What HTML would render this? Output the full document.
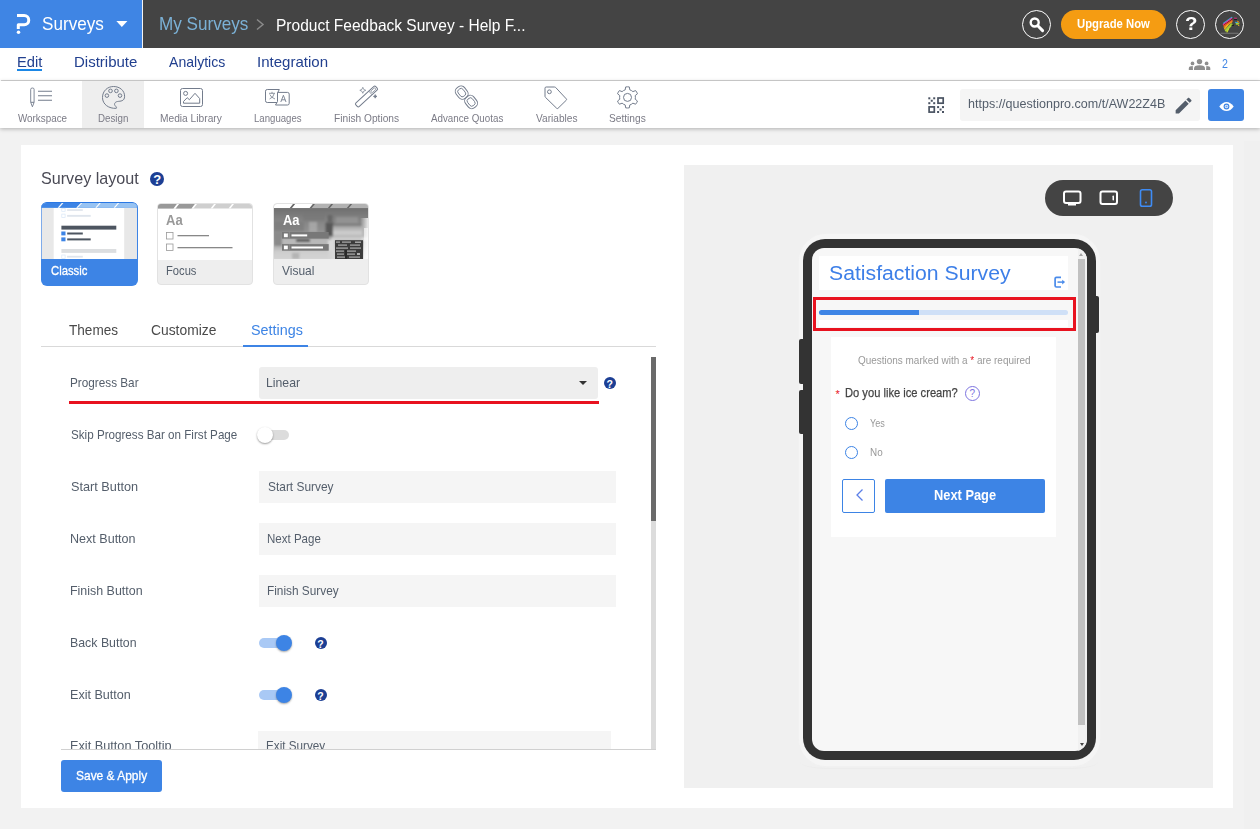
<!DOCTYPE html>
<html lang="en">
<head>
<meta charset="utf-8">
<title>Product Feedback Survey - Design</title>
<style>
*{box-sizing:border-box;margin:0;padding:0}
html,body{width:1260px;height:829px;overflow:hidden}
body{position:relative;background:#f2f2f2;font-family:"Liberation Sans",sans-serif;color:#4a4a4a}
.a{position:absolute}
.t{position:absolute;white-space:nowrap;line-height:1;transform-origin:0 0;z-index:2}
svg{position:absolute;overflow:visible}
/* top bar */
#top{left:0;top:0;width:1260px;height:48px;background:#444}
#brand{left:0;top:0;width:142px;height:48px;background:#3f85e4}
#brandsep{left:142px;top:0;width:1px;height:48px;background:#f4f4f4}
#sub{left:0;top:48px;width:1260px;height:33px;background:#fff}
#subline{left:1px;top:80px;width:1259px;height:1px;background:#d4d4d4}
#tool{left:0;top:81px;width:1260px;height:47px;background:#fff;box-shadow:0 1px 4px rgba(0,0,0,.28)}
#design-bg{left:82px;top:81px;width:62px;height:47px;background:#eee}
.circ{border:1.5px solid #fff;border-radius:50%;width:29px;height:29px;top:10px}
#upg{left:1061px;top:10px;width:105px;height:29px;border-radius:15px;background:#f59c12}
#urlbox{left:960px;top:89px;width:240px;height:32px;background:#f5f5f5;border-radius:3px}
#eye{left:1208px;top:89px;width:36px;height:32px;background:#3f85e4;border-radius:3px}
/* card */
#card{left:21px;top:145px;width:1212px;height:663px;background:#fff}
#prev{left:684px;top:165px;width:529px;height:622.500px;background:#f0f0f0}
.tl{color:#7b7b86;font-size:11px}
.nav{color:#22408f;font-size:15px}
.lbl{color:#545e6b;font-size:12.5px}
.inp{background:#f5f5f5;left:259px;width:357px;height:32px}
.help{width:12px;height:12px;border-radius:50%;background:#1c3f94;color:#fff;font-size:10.5px;font-weight:bold;text-align:center;line-height:14px;overflow:hidden}
</style>
</head>
<body>
<!-- TOP BAR -->
<div id="top" class="a"></div>
<div id="brand" class="a"></div>
<div id="brandsep" class="a"></div>
<div id="sub" class="a"></div>
<div id="subline" class="a"></div>
<div id="tool" class="a"></div>
<div id="design-bg" class="a"></div>

<span class="t" id="t-surveys" style="left:41.70px;top:13.96px;font-size:19px;color:#fff;transform:scaleX(0.9006)">Surveys</span>
<span class="t" id="t-mysurveys" style="left:158.53px;top:13.96px;font-size:19px;color:#7bb1d6;transform:scaleX(0.9007)">My Surveys</span>
<span class="t" id="t-title" style="left:275.79px;top:16.58px;font-size:16.5px;color:#fff;transform:scaleX(0.9413)">Product Feedback Survey - Help F...</span>
<span class="t" id="t-upg" style="left:1077.11px;top:16.86px;font-size:13px;color:#fff;font-weight:bold;transform:scaleX(0.8694)">Upgrade Now</span>

<span class="t nav" id="t-edit" style="left:16.67px;top:54.25px;font-size:15px;transform:scaleX(0.9801)">Edit</span>
<span class="t nav" id="t-dist" style="left:73.68px;top:54.25px;font-size:15px;transform:scaleX(0.9997)">Distribute</span>
<span class="t nav" id="t-anal" style="left:168.71px;top:54.25px;font-size:15px;transform:scaleX(0.9378)">Analytics</span>
<span class="t nav" id="t-integ" style="left:257.17px;top:54.25px;font-size:15px;transform:scaleX(1.0030)">Integration</span>
<div class="a" style="left:17px;top:69px;width:25px;height:2px;background:#1b87e6"></div>
<span class="t" id="t-two" style="left:1222.13px;top:56.96px;font-size:13px;color:#3f85e4;transform:scaleX(0.8191)">2</span>

<span class="t tl" id="t-work" style="left:17.71px;top:112.83px;font-size:11.5px;transform:scaleX(0.8559)">Workspace</span>
<span class="t tl" id="t-design" style="left:98.17px;top:112.83px;font-size:11.5px;transform:scaleX(0.8473)">Design</span>
<span class="t tl" id="t-media" style="left:160.20px;top:112.83px;font-size:11.5px;transform:scaleX(0.8871)">Media Library</span>
<span class="t tl" id="t-lang" style="left:254.20px;top:112.83px;font-size:11.5px;transform:scaleX(0.8356)">Languages</span>
<span class="t tl" id="t-finish" style="left:333.70px;top:112.83px;font-size:11.5px;transform:scaleX(0.8850)">Finish Options</span>
<span class="t tl" id="t-quota" style="left:430.71px;top:112.83px;font-size:11.5px;transform:scaleX(0.8502)">Advance Quotas</span>
<span class="t tl" id="t-vars" style="left:535.71px;top:112.83px;font-size:11.5px;transform:scaleX(0.8823)">Variables</span>
<span class="t tl" id="t-sett" style="left:609.21px;top:112.83px;font-size:11.5px;transform:scaleX(0.8844)">Settings</span>

<div id="urlbox" class="a"></div>
<span class="t" id="t-url" style="left:968.20px;top:97.46px;font-size:13px;color:#545e6b;transform:scaleX(0.9637)">https://questionpro.com/t/AW22Z4B</span>
<div id="eye" class="a"></div>
<div class="a circ" style="left:1022px"></div>
<div id="upg" class="a"></div>
<div class="a circ" style="left:1176px"></div>
<div class="a circ" style="left:1215px"></div>


<!-- ICONS: top bar -->
<svg style="left:0;top:0" width="142" height="48" viewBox="0 0 142 48" fill="none">
  <path d="M17 15.600H24.200A4.550 4.550 0 0 1 24.200 24.700H18.300V29" stroke="#fff" stroke-width="3" stroke-linejoin="round"/>
  <circle cx="18.500" cy="32.300" r="1.750" fill="#fff"/>
  <path d="M116.300 21H127.400L121.850 27Z" fill="#fff"/>
</svg>
<svg style="left:253px;top:16px" width="14" height="16" viewBox="0 0 14 16" fill="none"><path d="M4 3.500L10 8.500L4 13.500" stroke="#8a8a8a" stroke-width="1.500"/></svg>
<svg style="left:1022px;top:10px" width="29" height="29" viewBox="0 0 29 29" fill="none">
  <circle cx="12.700" cy="12.500" r="4" stroke="#fff" stroke-width="2.400"/>
  <path d="M15.800 15.800L20.600 20.600" stroke="#fff" stroke-width="3" stroke-linecap="round"/>
</svg>
<span class="t" id="t-help" style="left:1185.29px;top:15.41px;font-size:18px;font-weight:bold;color:#fff;transform:scaleX(1.1365)">?</span>
<svg style="left:1215px;top:10px" width="29" height="29" viewBox="0 0 29 29" fill="none" stroke-linecap="round">
  <path d="M8.500 13.200L16.800 7.400" stroke="#39a9e0" stroke-width="1.200"/>
  <path d="M8.300 14.400L16.600 8.600" stroke="#ec2f8f" stroke-width="1.200"/>
  <path d="M9.200 15L17 9.600" stroke="#111" stroke-width="0.800"/>
  <path d="M8.800 15.900L17.200 10.200" stroke="#f04e23" stroke-width="1.300"/>
  <path d="M9.200 17.200L17 11.600" stroke="#f7941d" stroke-width="1.300"/>
  <path d="M9.600 18.800L13 14.800" stroke="#fbb917" stroke-width="1.300"/>
  <path d="M11 20.300L16.500 14.500" stroke="#a5cd39" stroke-width="2.400"/>
  <path d="M12 22L13.500 19" stroke="#c8d92c" stroke-width="1.300"/>
  <path d="M17 15.300L18.500 15.200" stroke="#111" stroke-width="1"/>
  <path d="M19.500 8.200L21.500 8.300" stroke="#ec2f8f" stroke-width="1"/>
  <path d="M19.500 9.300L21.600 9.400" stroke="#111" stroke-width="0.900"/>
  <path d="M20.300 12.300L22.500 12.500" stroke="#39a9e0" stroke-width="1"/>
  <path d="M21.500 13.800L23.500 13.600" stroke="#a5cd39" stroke-width="1.800"/>
  <path d="M22.500 11.300L24 12.200" stroke="#f7941d" stroke-width="1"/>
  <path d="M23.300 15L24 15.800" stroke="#fbb917" stroke-width="1"/>
  <path d="M6 23.300H23" stroke="#777" stroke-width="1.100"/>
</svg>
<!-- people -->
<svg style="left:1188px;top:58px" width="24" height="13" viewBox="0 0 24 13" fill="#8e8e8e">
  <circle cx="11.500" cy="3.600" r="2.700"/>
  <path d="M6 12V10.500Q6 7.200 11.500 7.200Q17 7.200 17 10.500V12Z"/>
  <circle cx="4.500" cy="5.400" r="1.850"/>
  <path d="M0.800 12V10.200Q0.800 8.200 4.800 8.100Q4.800 9 5 12Z"/>
  <circle cx="18.600" cy="5.400" r="1.850"/>
  <path d="M22.300 12V10.200Q22.300 8.200 18.300 8.100Q18.300 9 18.100 12Z"/>
</svg>
<!-- toolbar icons -->
<svg style="left:0;top:81px" width="660" height="47" viewBox="0 81 660 47" fill="none" stroke="#737c8c" stroke-width="1">
  <!-- workspace -->
  <path d="M30.700 102.300V89.300Q30.700 88 32.400 88Q34.100 88 34.100 89.300V102.300L32.400 106.800Z" stroke-width="0.900"/>
  <path d="M30.800 102.300H34" />
    <path d="M38 91.300H52M38 95.700H52M38 100.300H52" stroke-width="1.100"/>
  <!-- design palette -->
  <path d="M116.300 108.300C109 108.800 102.500 104.500 102.500 97.500C102.500 91 107.500 86.500 113.500 86.500C120 86.500 124.600 90.800 124.600 96.200C124.600 101.500 120.500 101 117.500 101.500C114.500 102 114 104.500 115 105.500C116 106.500 117 107.800 116.300 108.300Z"/>
  <circle cx="106.900" cy="95.600" r="1.800"/><circle cx="110.500" cy="90.900" r="1.800"/><circle cx="116.400" cy="90.900" r="1.800"/><circle cx="120" cy="95.600" r="1.800"/>
  <!-- media -->
  <rect x="180.500" y="88.500" width="22" height="18" rx="2"/>
  <circle cx="185.600" cy="93.400" r="2"/>
  <path d="M183.500 103.200V101.500L187.200 97.700L189.400 99.700L195 93.300L199.700 98.600V103.200Z" stroke-linejoin="round"/>
  <!-- languages -->
  <path d="M277 102.500H267.300Q265.500 102.500 265.500 100.700V91.200Q265.500 89.500 267.300 89.500H279.300L277.800 92.500"/>
  <path d="M277.500 92.400H287.500Q289.200 92.400 289.200 94.100V103.300Q289.200 105 287.500 105H275.500L277.500 101.500Z"/>
  <path d="M269 93.300H275M272 91.800V93.300M269.500 99Q273.500 97.500 274.200 93.500M269.800 94.500Q271 97.500 275 99" stroke-width="0.800"/>
  <path d="M280.800 102L283.400 95.300L286 102M281.700 99.800H285.100" stroke-width="0.900"/>
  <!-- wand -->
  <g transform="rotate(-42.500 366.500 96.500)"><rect x="353" y="94" width="27" height="5" rx="1.500"/><rect x="373" y="95.400" width="5.500" height="2.200" rx="1" stroke-width="0.700"/><path d="M371.800 94V99" stroke-width="0.700"/></g>
  <path d="M362.800 87.300Q363.100 90 365.800 90.300Q363.100 90.600 362.800 93.300Q362.500 90.600 359.800 90.300Q362.500 90 362.800 87.300Z" stroke-width="0.700"/>
  <path d="M375.200 94.600Q375.400 96.200 377 96.400Q375.400 96.600 375.200 98.200Q375 96.600 373.400 96.400Q375 96.200 375.200 94.600Z" stroke-width="0.700" fill="#737c8c"/>
  <!-- chain -->
  <g transform="rotate(-38 461.700 92.600)"><rect x="456.400" y="86" width="10.600" height="13.200" rx="4.500" stroke-width="1"/><rect x="458.700" y="88.400" width="6" height="8.400" rx="2.400" stroke-width="0.900"/></g>
  <g transform="rotate(-38 471.100 102)"><rect x="465.800" y="95.400" width="10.600" height="13.200" rx="4.500" stroke-width="1"/><rect x="468.100" y="97.800" width="6" height="8.400" rx="2.400" stroke-width="0.900"/></g>
  <!-- tag -->
  <path d="M546.200 87H554.500Q555.200 87 555.700 87.500L566.300 98.900Q566.900 99.600 566.300 100.200L558 108.300Q557.300 108.900 556.700 108.300L545.500 97.400Q545 96.900 545 96.200V88.200Q545 87 546.200 87Z"/>
  <circle cx="549.400" cy="91.800" r="1.900"/>
  <!-- gear -->
  <circle cx="627.500" cy="97.400" r="4"/>
  <path id="gearp" d="M629.81 89.85L629.34 86.96A10.6 10.6 0 0 0 625.66 86.96L625.19 89.85A7.9 7.9 0 0 0 622.11 91.62L619.38 90.59A10.6 10.6 0 0 0 617.54 93.77L619.80 95.62A7.9 7.9 0 0 0 619.80 99.18L617.54 101.03A10.6 10.6 0 0 0 619.38 104.21L622.11 103.18A7.9 7.9 0 0 0 625.19 104.95L625.66 107.84A10.6 10.6 0 0 0 629.34 107.84L629.81 104.95A7.9 7.9 0 0 0 632.89 103.18L635.62 104.21A10.6 10.6 0 0 0 637.46 101.03L635.20 99.18A7.9 7.9 0 0 0 635.20 95.62L637.46 93.77A10.6 10.6 0 0 0 635.62 90.59L632.89 91.62A7.9 7.9 0 0 0 629.81 89.85Z" stroke-linejoin="round"/>
</svg>
<!-- qr -->
<svg style="left:928px;top:97px" width="16" height="16" viewBox="0 0 16 16" fill="#4a5362">
  <rect x="0.300" y="0.300" width="2" height="2"/><rect x="5.200" y="0.300" width="2" height="2"/><rect x="2.750" y="2.750" width="2" height="2"/><rect x="0.300" y="5.200" width="2" height="2"/><rect x="5.200" y="5.200" width="2" height="2"/>
  <rect x="9.100" y="9.100" width="2" height="2"/><rect x="14" y="9.100" width="2" height="2"/><rect x="11.550" y="11.550" width="2" height="2"/><rect x="9.100" y="14" width="2" height="2"/><rect x="14" y="14" width="2" height="2"/>
  <rect x="10" y="1" width="5.200" height="5.200" fill="none" stroke="#4a5362" stroke-width="1.700"/>
  <rect x="1.100" y="9.900" width="5.200" height="5.200" fill="none" stroke="#4a5362" stroke-width="1.700"/>
</svg>
<!-- pencil -->
<svg style="left:1173.300px;top:94.800px" width="21.200" height="21.200" viewBox="0 0 24 24" fill="#545e6b"><path d="M3 17.250V21h3.750L17.810 9.940l-3.750-3.750L3 17.250zM20.710 7.040c.39-.39.390-1.020 0-1.410l-2.340-2.340c-.39-.39-1.020-.39-1.410 0l-1.830 1.830 3.750 3.750 1.830-1.830z"/></svg>
<!-- eye -->
<svg style="left:1218.500px;top:101.500px" width="15" height="9" viewBox="0 0 15 9"><path d="M0.300 4.500Q3.500 0 7.500 0Q11.500 0 14.700 4.500Q11.500 9 7.500 9Q3.500 9 0.300 4.500Z" fill="#fff"/><circle cx="7.500" cy="4.500" r="2.900" fill="#3d84e5"/><circle cx="7.500" cy="4.500" r="1.700" fill="#fff"/><circle cx="7.500" cy="4.500" r="1.100" fill="#6fa4ec"/></svg>
<div class="a" style="left:1244px;top:141px;width:16px;height:688px;background:#f0f0f0"></div>
<!-- CARD -->
<div id="card" class="a"></div>
<div id="prev" class="a"></div>
<span class="t" id="t-layout" style="left:40.71px;top:169.55px;font-size:17px;color:#4a4a55;transform:scaleX(0.9495)">Survey layout</span>
<div class="a help" style="left:150.400px;top:172px;width:13.700px;height:13.800px;line-height:15.500px;font-size:13px">?</div>

<!-- layout cards -->
<div class="a" id="lc1" style="left:41px;top:202px;width:97px;height:84px;border-radius:6px;background:#3d84e5;overflow:hidden;border-top:1px solid #2a78e4">
  <svg style="left:1.200px;top:0" width="94.800" height="56" viewBox="42.200 203 94.800 56">
    <rect x="42" y="207.800" width="95" height="51.200" fill="#fff"/>
    <rect x="42" y="207.800" width="11.900" height="51.200" fill="#e8e8e8"/>
    <rect x="124.400" y="207.800" width="12.600" height="51.200" fill="#e8e8e8"/>
    <rect x="42" y="203" width="95" height="4.800" fill="#98c3f2"/>
    <path d="M42 203H62.800L58.700 207.800H42Z" fill="#3d84e5"/>
    <path d="M63.800 203H81.800L76.800 207.800H59.700Z" fill="#3d84e5"/>
    <g fill="#fff"><path d="M62 203h1.400l-4.100 4.800h-1.400z"/><path d="M81 203h1.400l-4.600 4.800h-1.400z"/><path d="M99.600 203h1.400l-4.100 4.800h-1.400z"/><path d="M118 203h1.400l-4.100 4.800h-1.400z"/></g>
    <g fill="#dfe5ed"><rect x="67.300" y="209.200" width="15.700" height="1.700"/><rect x="67.300" y="214.900" width="23.600" height="1.900"/><rect x="67.300" y="255.800" width="15.700" height="1.800"/></g>
    <g fill="#fff" stroke="#d8e6f7" stroke-width="0.700"><rect x="62" y="208.300" width="3.300" height="3"/><rect x="62" y="214.100" width="3.300" height="3.500"/><rect x="62" y="255" width="3.300" height="3.500"/></g>
    <rect x="61.600" y="225.700" width="54.900" height="3.900" fill="#4d5560"/>
    <rect x="61.500" y="231.500" width="4.200" height="3.900" fill="#3d84e5"/><rect x="67.400" y="232.500" width="15.600" height="2" fill="#4d5560"/>
    <rect x="61.500" y="237.400" width="4.200" height="3.900" fill="#3d84e5"/><rect x="67.400" y="238.400" width="23.500" height="2" fill="#4d5560"/>
    <rect x="61.600" y="249" width="54.900" height="3.900" fill="#dcdee0"/>
  </svg>
</div>
<span class="t" id="t-classic" style="left:50.70px;top:263.66px;font-size:13px;color:#fff;transform:scaleX(0.8699);-webkit-text-stroke:0.3px #fff">Classic</span>

<div class="a" id="lc2" style="left:157px;top:203px;width:96px;height:82px;border-radius:4px;background:#eee;overflow:hidden;border:1px solid #e2e2e2">
  <svg style="left:0;top:0" width="94" height="56" viewBox="0 0 94 56">
    <rect x="0" y="0" width="94" height="56" fill="#fff"/>
    <rect x="0" y="0" width="94" height="4.500" fill="#cfcfcf"/>
    <path d="M0 0H19L15.500 4.500H0Z" fill="#999"/><path d="M21 0H37L33.500 4.500H17.500Z" fill="#999"/>
    <g fill="#fff"><path d="M19 0h2l-3.500 4.500h-2z"/><path d="M37 0h2l-3.500 4.500h-2z"/><path d="M56 0h2l-3.500 4.500h-2z"/><path d="M74 0h2l-3.500 4.500h-2z"/></g>
    <rect x="8.500" y="28.500" width="6.500" height="6.500" fill="#fff" stroke="#999" stroke-width="0.800"/>
    <rect x="19.500" y="31" width="31.500" height="1.300" fill="#888"/>
    <rect x="8.500" y="40" width="6.500" height="6.500" fill="#fff" stroke="#999" stroke-width="0.800"/>
    <rect x="19.500" y="43" width="55" height="1.300" fill="#888"/>
  </svg>
</div>
<span class="t" id="t-aa1" style="left:166.11px;top:212.50px;font-size:14px;font-weight:bold;color:#999;transform:scaleX(0.9296)">Aa</span>
<span class="t" id="t-focus" style="left:165.97px;top:263.66px;font-size:13px;color:#545e6b;transform:scaleX(0.8596)">Focus</span>

<div class="a" id="lc3" style="left:273px;top:203px;width:96px;height:82px;border-radius:4px;background:#eee;overflow:hidden;border:1px solid #e2e2e2">
  <svg style="left:0;top:0" width="94" height="56" viewBox="274 204 94 56">
    <defs>
      <linearGradient id="vg" x1="0" y1="0" x2="0" y2="1"><stop offset="0" stop-color="#6c6c6c"/><stop offset="0.250" stop-color="#838383"/><stop offset="0.600" stop-color="#9a9a9a"/><stop offset="0.820" stop-color="#c4c4c4"/><stop offset="1" stop-color="#dcdcdc"/></linearGradient>
      <linearGradient id="vh" x1="0" y1="0" x2="1" y2="0"><stop offset="0" stop-color="#fff" stop-opacity="0"/><stop offset="1" stop-color="#fff" stop-opacity="1"/></linearGradient>
      <linearGradient id="vc" x1="0" y1="0" x2="0" y2="1"><stop offset="0" stop-color="#9c9c9c"/><stop offset="0.600" stop-color="#d0d0d0"/><stop offset="1" stop-color="#b4b4b4"/></linearGradient>
      <filter id="vb" x="-5%" y="-5%" width="110%" height="110%"><feGaussianBlur stdDeviation="1.100"/></filter>
      <clipPath id="vclip"><rect x="274" y="208" width="94" height="51"/></clipPath>
    </defs>
    <g clip-path="url(#vclip)">
    <g filter="url(#vb)">
      <rect x="272" y="206" width="98" height="55" fill="url(#vg)"/>
      <rect x="274" y="222" width="30" height="9" fill="#7a7a7a" opacity="0.700"/>
      <rect x="274" y="238.500" width="56" height="5.500" fill="#b9b9b9"/>
      <rect x="296" y="239" width="14" height="3" fill="#555"/>
      <rect x="274" y="232" width="8" height="14" fill="#8a8a8a"/>
      <rect x="303" y="213" width="22" height="8" fill="#777" opacity="0.600"/>
      <rect x="309" y="222" width="8" height="10" fill="#b0b0b0" opacity="0.700"/>
      <rect x="325.500" y="222.500" width="8" height="13.500" fill="#585858"/>
      <rect x="327.500" y="215" width="5" height="7" fill="#666"/>
      <rect x="333" y="225.500" width="29" height="12" fill="url(#vc)"/>
      <rect x="333" y="224" width="29" height="1.500" fill="#777"/>
      <rect x="336" y="217" width="22" height="6" fill="#999" opacity="0.700"/>
      <rect x="331" y="237.500" width="38" height="3" fill="#d4d4d4"/>
      <rect x="328" y="240" width="7" height="19" fill="#dadada"/>
      <rect x="292" y="252" width="8" height="7" fill="#b0b0b0"/>
      <rect x="274" y="250.500" width="58" height="9" fill="#d2d2d2" opacity="0.700"/>
      <rect x="292" y="253" width="7" height="6" fill="#b4b4b4"/>
    </g>
    <rect x="360" y="218" width="8" height="42" fill="url(#vh)" opacity="0.800"/>
    <rect x="364" y="228" width="4" height="32" fill="#fff" opacity="0.600"/>
    <rect x="335" y="240.200" width="28" height="19" fill="#3c3c3c"/>
    <g fill="#c4c4c4" opacity="0.850"><rect x="336" y="241.500" width="4" height="1.200"/><rect x="342" y="241.500" width="9" height="1.200"/><rect x="355" y="241.500" width="6" height="1.400"/><rect x="338" y="244.500" width="9" height="1.200"/><rect x="350" y="244.500" width="10" height="1.200"/><rect x="336" y="247.500" width="12" height="1.200"/><rect x="350" y="247.500" width="11" height="1.200"/><rect x="336" y="250.500" width="8" height="1.200"/><rect x="347" y="250.500" width="9" height="1.200"/><rect x="337" y="253.500" width="7" height="1.200"/><rect x="347" y="253.500" width="8" height="1.200"/><rect x="357" y="253" width="3" height="2"/><rect x="337" y="256.500" width="9" height="1.200"/><rect x="349" y="256.500" width="11" height="1.200"/></g>
    <rect x="345" y="250" width="2" height="9" fill="#2a2a2a"/>
    <rect x="282" y="232" width="46.700" height="6.600" fill="#787878"/>
    <rect x="288.800" y="232" width="1" height="6.600" fill="#8c8c8c"/>
    <rect x="283.900" y="233.500" width="3.900" height="3.700" fill="#fff"/><rect x="291.500" y="234.400" width="15.700" height="2" fill="#fff"/>
    <rect x="282" y="244.100" width="46.700" height="6.600" fill="#787878"/>
    <rect x="288.800" y="244.100" width="1" height="6.600" fill="#8c8c8c"/>
    <rect x="283.900" y="245.600" width="3.900" height="3.700" fill="#fff"/><rect x="291.500" y="246.500" width="31.500" height="2" fill="#fff"/>
    </g>
    <rect x="274" y="203.500" width="94" height="4.600" fill="#b2b2b2"/>
    <path d="M274 203.500H293.500L289.800 208.100H274Z" fill="#fff"/><path d="M295.500 203.500H313.300L309.700 208.100H291.800Z" fill="#fff"/>
    <g fill="#666"><path d="M293.500 203.500h2l-3.700 4.600h-2z"/><path d="M313.300 203.500h2l-3.600 4.600h-2z"/><path d="M331.500 203.500h2l-3.600 4.600h-2z"/><path d="M350.600 203.500h2l-3.800 4.600h-2z"/></g>
  </svg>
</div>
<span class="t" id="t-aa2" style="left:282.71px;top:212.50px;font-size:14px;font-weight:bold;color:#fff;transform:scaleX(0.9244)">Aa</span>
<span class="t" id="t-visual" style="left:282.21px;top:263.66px;font-size:13px;color:#545e6b;transform:scaleX(0.9222)">Visual</span>

<!-- tabs -->
<span class="t" id="t-themes" style="left:68.71px;top:322.36px;font-size:15px;color:#4a4a4a;transform:scaleX(0.9052)">Themes</span>
<span class="t" id="t-custom" style="left:150.91px;top:322.36px;font-size:15px;color:#4a4a4a;transform:scaleX(0.9225)">Customize</span>
<span class="t" id="t-settings" style="left:250.60px;top:322.36px;font-size:15px;color:#3d84e5;transform:scaleX(0.9570)">Settings</span>
<div class="a" style="left:41px;top:346px;width:615px;height:1px;background:#d9d9d9"></div>
<div class="a" style="left:243px;top:345px;width:65px;height:2px;background:#3d84e5"></div>

<!-- settings rows -->
<span class="t lbl" id="t-pb" style="left:70.20px;top:375.96px;font-size:13px;transform:scaleX(0.9036)">Progress Bar</span>
<div class="a" style="left:259px;top:367px;width:339px;height:32px;background:#eee;border-radius:3px"></div>
<span class="t lbl" id="t-linear" style="left:265.68px;top:375.96px;font-size:13px;transform:scaleX(0.9427)">Linear</span>
<div class="a" style="left:579px;top:381px;width:0;height:0;border-left:4px solid transparent;border-right:4px solid transparent;border-top:4px solid #333"></div>
<div class="a help" style="left:603.800px;top:376.800px">?</div>
<div class="a" style="left:69px;top:401px;width:530px;height:3px;background:#e8121f"></div>

<span class="t lbl" id="t-skip" style="left:71.21px;top:428.25px;font-size:13px;transform:scaleX(0.8956)">Skip Progress Bar on First Page</span>
<div class="a" style="left:258px;top:430px;width:31px;height:10px;border-radius:5px;background:#dcdcdc"></div>
<div class="a" style="left:256.500px;top:427px;width:16px;height:16px;border-radius:50%;background:#fff;box-shadow:0 1px 2px rgba(0,0,0,.4)"></div>

<span class="t lbl" id="t-startb" style="left:70.70px;top:479.96px;font-size:13px;transform:scaleX(0.9769)">Start Button</span>
<div class="a inp" style="top:471px"></div>
<span class="t lbl" id="t-starts" style="left:267.71px;top:479.96px;font-size:13px;transform:scaleX(0.9164)">Start Survey</span>

<span class="t lbl" id="t-nextb" style="left:70.18px;top:531.96px;font-size:13px;transform:scaleX(0.9653)">Next Button</span>
<div class="a inp" style="top:523px"></div>
<span class="t lbl" id="t-nextp" style="left:266.68px;top:531.96px;font-size:13px;transform:scaleX(0.8867)">Next Page</span>

<span class="t lbl" id="t-finb" style="left:70.18px;top:583.96px;font-size:13px;transform:scaleX(0.9565)">Finish Button</span>
<div class="a inp" style="top:575px"></div>
<span class="t lbl" id="t-fins" style="left:266.70px;top:583.96px;font-size:13px;transform:scaleX(0.9099)">Finish Survey</span>

<span class="t lbl" id="t-backb" style="left:70.18px;top:635.96px;font-size:13px;transform:scaleX(0.9497)">Back Button</span>
<div class="a" style="left:259px;top:638px;width:30px;height:10px;border-radius:5px;background:#a9c9f5"></div>
<div class="a" style="left:275.500px;top:634.500px;width:16px;height:16px;border-radius:50%;background:#3d84e5;box-shadow:0 1px 2px rgba(0,0,0,.35)"></div>
<div class="a help" style="left:314.500px;top:636.800px">?</div>

<span class="t lbl" id="t-exitb" style="left:70.18px;top:687.96px;font-size:13px;transform:scaleX(0.9676)">Exit Button</span>
<div class="a" style="left:259px;top:690px;width:30px;height:10px;border-radius:5px;background:#a9c9f5"></div>
<div class="a" style="left:275.500px;top:686.500px;width:16px;height:16px;border-radius:50%;background:#3d84e5;box-shadow:0 1px 2px rgba(0,0,0,.35)"></div>
<div class="a help" style="left:314.500px;top:688.800px">?</div>

<div class="a" style="left:61px;top:725px;width:595px;height:24px;overflow:hidden">
  <div class="a" style="left:197px;top:6px;width:353px;height:31px;background:#f5f5f5"></div>
  <span class="t lbl" id="t-exitt" style="left:9.20px;top:14.46px;font-size:13px;transform:scaleX(0.9782)">Exit Button Tooltip</span>
  <span class="t lbl" id="t-exits" style="left:204.70px;top:14.46px;font-size:13px;transform:scaleX(0.8982)">Exit Survey</span>
</div>
<div class="a" style="left:61px;top:749px;width:595px;height:1px;background:#d0d0d0"></div>
<!-- scrollbar -->
<div class="a" style="left:651px;top:357px;width:5px;height:392px;background:#dcdcdc"></div>
<div class="a" style="left:651px;top:357px;width:5px;height:164px;background:#6a6a6a"></div>

<div class="a" style="left:61px;top:760px;width:101px;height:32px;border-radius:3px;background:#3d84e5"></div>
<span class="t" id="t-save" style="left:76.21px;top:769.05px;font-size:13px;color:#fff;transform:scaleX(0.9201);-webkit-text-stroke:0.3px #fff">Save &amp; Apply</span>

<!-- PREVIEW -->
<div class="a" style="left:1045px;top:180px;width:128px;height:36px;border-radius:18px;background:#444"></div>
<svg style="left:1045px;top:180px" width="128" height="36" viewBox="0 0 128 36" fill="none">
  <rect x="19" y="11.500" width="16.500" height="11.500" rx="2" stroke="#fff" stroke-width="2"/>
  <rect x="23" y="23.500" width="8" height="2" fill="#fff"/>
  <rect x="55.500" y="11.500" width="16.500" height="12.500" rx="2" stroke="#fff" stroke-width="2"/>
  <rect x="67.500" y="15.500" width="1.500" height="5" rx="0.700" fill="#fff"/>
  <rect x="95.500" y="9.750" width="11" height="16.500" rx="1.800" stroke="#3f8cf5" stroke-width="1.600"/>
  <circle cx="101" cy="22.500" r="0.900" fill="#3f8cf5"/>
</svg>

<!-- phone -->
<div class="a" style="left:798.500px;top:234px;width:301.500px;height:531.500px;border-radius:27px;background:#f5f5f5;box-shadow:0 0 1.500px #f3f3f3"></div>
<div class="a" style="left:800px;top:762px;width:298px;height:7px;border-radius:0 0 30px 30px/0 0 7px 7px;border-bottom:1px solid #ececec"></div>
<div class="a" style="left:1095px;top:296px;width:4px;height:36.500px;background:#333;border-radius:0 2px 2px 0"></div>
<div class="a" style="left:799px;top:339px;width:4px;height:45px;background:#333;border-radius:2px 0 0 2px"></div>
<div class="a" style="left:799px;top:390px;width:4px;height:44px;background:#333;border-radius:2px 0 0 2px"></div>
<div class="a" style="left:802.500px;top:239px;width:293px;height:520.500px;border-radius:22px;background:#333"></div>
<div class="a" id="screen" style="left:811.500px;top:248px;width:275px;height:503px;border-radius:12px;background:#f7f7f7;overflow:hidden">
  <div class="a" style="left:7.500px;top:8px;width:249px;height:34px;background:#fff"></div>
  <div class="a" style="left:7.500px;top:72px;width:249px;height:7px;background:#fff"></div>
  <div class="a" style="left:7.500px;top:61.500px;width:249px;height:5.500px;border-radius:3px;background:#cfe0f7"></div>
  <div class="a" style="left:7.500px;top:61.500px;width:100px;height:5.500px;border-radius:3px 0 0 3px;background:#3d84e5"></div>
  <div class="a" style="left:1.500px;top:49px;width:263px;height:34px;border:3px solid #e8121f"></div>
  <div class="a" style="left:19.500px;top:89px;width:225px;height:200px;background:#fff"></div>
  <div class="a" style="left:266px;top:0;width:9px;height:503px;background:#f1f1f1"></div>
  <div class="a" style="left:266.500px;top:11px;width:7px;height:465.500px;background:#c1c1c1"></div>
  <div class="a" style="left:267.500px;top:5px;width:0;height:0;border-left:2.700px solid transparent;border-right:2.700px solid transparent;border-bottom:3px solid #a3a3a3"></div>
  <div class="a" style="left:268px;top:495px;width:0;height:0;border-left:2.500px solid transparent;border-right:2.500px solid transparent;border-top:3px solid #444"></div>
  <div class="a" style="left:30.500px;top:231px;width:33px;height:34px;border:1px solid #3d84e5;border-radius:2px;background:#fff"></div>
  <div class="a" style="left:73.500px;top:231px;width:160px;height:34px;border-radius:2px;background:#3d84e5"></div>
  <div class="a" style="left:33.500px;top:169px;width:13px;height:13px;border:1.300px solid #3d84e5;border-radius:50%"></div>
  <div class="a" style="left:33.500px;top:198px;width:13px;height:13px;border:1.300px solid #3d84e5;border-radius:50%"></div>
  <div class="a" style="left:153.500px;top:138px;width:15px;height:15px;border:1px solid #7d74e0;border-radius:50%"></div>
</div>
<span class="t" id="t-sat" style="left:829.21px;top:262.50px;font-size:20px;color:#3d7fe8;transform:scaleX(1.0604)">Satisfaction Survey</span>
<span class="t" id="t-req" style="left:857.71px;top:354.66px;font-size:11px;color:#999;transform:scaleX(0.9045)">Questions marked with a <span style="color:#e8121f">*</span> are required</span>
<span class="t" id="t-star" style="left:835.500px;top:389px;font-size:11px;color:#e8121f">*</span>
<span class="t" id="t-q" style="left:845.20px;top:386.46px;font-size:13px;color:#444;transform:scaleX(0.8578);-webkit-text-stroke:0.25px #444">Do you like ice cream?</span>
<span class="t" id="t-qh" style="left:969.500px;top:388.500px;font-size:10px;color:#7d74e0">?</span>
<span class="t" id="t-yes" style="left:870.19px;top:417.66px;font-size:11px;color:#999;transform:scaleX(0.8254)">Yes</span>
<span class="t" id="t-no" style="left:869.67px;top:446.66px;font-size:11px;color:#999;transform:scaleX(0.8970)">No</span>
<span class="t" id="t-np" style="left:934.20px;top:487.68px;font-size:14.5px;font-weight:bold;color:#fff;transform:scaleX(0.8850)">Next Page</span>
<svg style="left:854.500px;top:488px" width="10" height="14" viewBox="0 0 10 14" fill="none"><path d="M7.500 1.500L2 7L7.500 12.500" stroke="#5b7fe8" stroke-width="1.300"/></svg>
<svg style="left:1053px;top:275px" width="14" height="14" viewBox="0 0 14 14" fill="none"><path d="M8 2.400H3.400Q2.100 2.400 2.100 3.700V10.700Q2.100 12 3.400 12H8" stroke="#4a8bea" stroke-width="1.700"/><path d="M4.500 7.100H10" stroke="#4a8bea" stroke-width="1.500"/><path d="M9.200 4.700L12.100 7.100L9.200 9.500Z" fill="#4a8bea"/></svg>
</body>
</html>
